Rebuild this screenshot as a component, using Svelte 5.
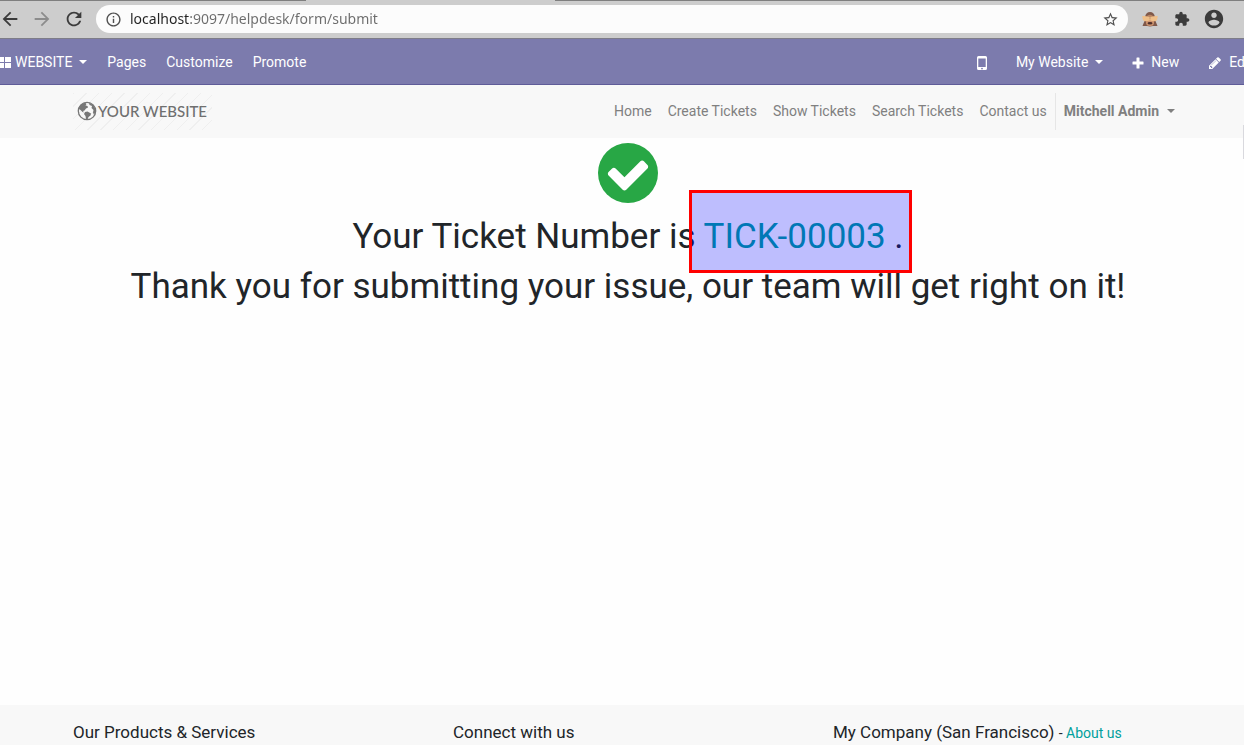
<script>
  const icons = {
    back: 'M20 11H7.83l5.59-5.59L12 4l-8 8 8 8 1.41-1.41L7.83 13H20v-2z',
    forward: 'M12 4l-1.41 1.41L16.17 11H4v2h12.17l-5.58 5.59L12 20l8-8z',
    reload: 'M17.65 6.35C16.2 4.9 14.21 4 12 4c-4.42 0-7.99 3.58-7.99 8s3.57 8 7.99 8c3.73 0 6.84-2.55 7.73-6h-2.08c-.82 2.33-3.04 4-5.65 4-3.31 0-6-2.69-6-6s2.69-6 6-6c1.66 0 3.14.69 4.22 1.78L13 11h7V4l-2.35 2.35z',
    info: 'M11 17h2v-6h-2v6zm1-15C6.48 2 2 6.48 2 12s4.48 10 10 10 10-4.48 10-10S17.52 2 12 2zm0 18c-4.41 0-8-3.59-8-8s3.59-8 8-8 8 3.59 8 8-3.59 8-8 8zM11 9h2V7h-2v2z',
    star: 'M22 9.24l-7.19-.62L12 2 9.19 8.63 2 9.24l5.46 4.73L5.82 21 12 17.27 18.18 21l-1.63-7.03L22 9.24zM12 15.4l-3.76 2.27 1-4.28-3.32-2.88 4.38-.38L12 6.1l1.71 4.04 4.38.38-3.32 2.88 1 4.28L12 15.4z',
    puzzle: 'M20.5 11H19V7c0-1.1-.9-2-2-2h-4V3.5C13 2.12 11.88 1 10.5 1S8 2.12 8 3.5V5H4c-1.1 0-1.99.9-1.99 2v3.8H3.5c1.49 0 2.7 1.21 2.7 2.7s-1.21 2.7-2.7 2.7H2V20c0 1.1.9 2 2 2h3.8v-1.5c0-1.49 1.21-2.7 2.7-2.7 1.49 0 2.7 1.21 2.7 2.7V22H17c1.1 0 2-.9 2-2v-4h1.5c1.38 0 2.5-1.12 2.5-2.5S21.88 11 20.5 11z',
    account: 'M12 2C6.48 2 2 6.48 2 12s4.48 10 10 10 10-4.48 10-10S17.52 2 12 2zm0 3c1.66 0 3 1.34 3 3s-1.34 3-3 3-3-1.34-3-3 1.34-3 3-3zm0 14.2c-2.5 0-4.71-1.28-6-3.22.03-1.99 4-3.08 6-3.08 1.99 0 5.97 1.09 6 3.08-1.29 1.94-3.5 3.22-6 3.22z'
  };
  const links = ['Home', 'Create Tickets', 'Show Tickets', 'Search Tickets', 'Contact us'];
  let url = $state('localhost:9097/helpdesk/form/submit');
</script>

{#snippet glyph(name, size)}
  <svg width={size} height={size} viewBox="0 0 24 24" fill="currentColor" aria-hidden="true"><path d={icons[name]} /></svg>
{/snippet}

<div class="page">
  <div class="browser">
    <button class="tool" aria-label="Back">{@render glyph('back', 22)}</button>
    <button class="tool dim" aria-label="Forward">{@render glyph('forward', 22)}</button>
    <button class="tool" aria-label="Reload">{@render glyph('reload', 22)}</button>
    <div class="omnibox">
      <button class="info" aria-label="Site information">{@render glyph('info', 17)}</button>
      <input aria-label="Address" spellcheck="false" bind:value={url} />
      <button class="star" aria-label="Bookmark">{@render glyph('star', 17)}</button>
    </div>
    <button class="tool" aria-label="Debug mode">
      <svg width="16" height="16" viewBox="0 0 16 16" aria-hidden="true">
        <path d="M3 6Q4 1 8 1Q12 1 13 6L13.500 10 15.500 15H11L8 15.500 5 15H.5L2.500 10Z" fill="#80594a" />
        <ellipse cx="8" cy="11.500" rx="4" ry="3.500" fill="#cf9670" />
        <path d="M5.500 4.500Q8 3 10.500 4.500L11 6H5Z" fill="#b98462" />
        <path d="M.300 5Q3 4.500 7.800 6V9.500Q4.500 11 1.500 9.800 .3 8 .3 5ZM15.700 5Q13 4.500 8.200 6V9.500Q11.500 11 14.500 9.800 15.700 8 15.700 5Z" fill="#efc08a" />
        <ellipse cx="8" cy="12.300" rx="2.500" ry="1.300" fill="#4f2f2b" />
      </svg>
    </button>
    <button class="tool" aria-label="Extensions">{@render glyph('puzzle', 16)}</button>
    <button class="tool" aria-label="Profile">{@render glyph('account', 22)}</button>
  </div>

  <nav class="editor" aria-label="Website editor">
    <a class="apps" href="#website">
      <svg width="11" height="12" viewBox="0 0 11 12" fill="#fff" aria-hidden="true"><path d="M0 0h4v5H0zM5 0h6v5H5zM0 6h4v5H0zM5 6h6v5H5z" /></svg>
      WEBSITE <span class="caret"></span>
    </a>
    <a href="#pages">Pages</a>
    <a href="#customize">Customize</a>
    <a href="#promote">Promote</a>
    <div class="actions">
      <button aria-label="Mobile preview">
        <svg width="10" height="14" viewBox="0 0 10 14" aria-hidden="true"><path fill="#fff" fill-rule="evenodd" d="M1.500 0h7Q10 0 10 1.500v11Q10 14 8.500 14h-7Q0 14 0 12.500v-11Q0 0 1.500 0zM1.300 2.500v8.500h7.400V2.500zM5 11.800a.8.800 0 1 0 .01 0z" /></svg>
      </button>
      <button>My Website <span class="caret"></span></button>
      <button>
        <svg width="12" height="12" viewBox="0 0 12 12" fill="#fff" aria-hidden="true"><path d="M4.500 1Q4.500.5 5 .5h2q.5 0 .5.500v3.500H11q.5 0 .5.500v2q0 .5-.5.500H7.500V11q0 .5-.5.500H5q-.5 0-.5-.500V7.500H1Q.5 7.500.5 7V5q0-.5.500-.5h3.500z" /></svg>
        New
      </button>
      <button>
        <svg width="14" height="14" viewBox="0 0 1792 1792" fill="#fff" aria-hidden="true"><path d="M491 1536l91-91-235-235-91 91v107h128v128h107zm523-928q0-22-22-22-10 0-17 7l-542 542q-7 7-7 17 0 22 22 22 10 0 17-7l542-542q7-7 7-17zm-54-192l416 416-832 832h-416v-416zm683 96q0 53-37 90l-166 166-416-416 166-165q36-38 90-38 53 0 91 38l235 234q37 39 37 91z" /></svg>
        Edit
      </button>
    </div>
  </nav>

  <header>
    <a class="logo" href="#home">
      <svg width="20" height="20" viewBox="0 0 20 20" aria-hidden="true">
        <circle cx="10" cy="10" r="8.700" fill="none" stroke="#777" stroke-width="1.300" />
        <path fill="#777" d="M2 6Q4 2.500 8 1.500L9.500 3 8.500 4.500l2 .5.500 1.500-2 1-1.500 2-1.500.5 1 1.500-1.500-.5L3.500 9 2 8zM8 11l2.500-.5 3.500 2-.5 2-2 1.500-1 2.500-1.500-.5-.5-3L7 13zM12 1.500Q16 3 18 7l.5 4-1.500 3-1-2.500.5-2.500-2-2 .5-2-2.500-1z" />
      </svg>
      YOUR WEBSITE
    </a>
    <nav class="menu" aria-label="Main">
      {#each links as link}
        <a href="#{link.toLowerCase().replace(' ', '-')}">{link}</a>
      {/each}
      <button class="user">Mitchell Admin <span class="caret"></span></button>
    </nav>
  </header>

  <main>
    <svg class="check" width="60" height="60" viewBox="0 0 1536 1536" aria-hidden="true">
      <circle cx="768" cy="768" r="768" fill="#28a745" />
      <path fill="#fff" d="M1284 606q0-28-18-46l-91-90q-19-19-45-19t-45 19l-408 407-226-226q-19-19-45-19t-45 19l-91 90q-18 18-18 46 0 27 18 45l362 362q19 19 45 19 27 0 46-19l543-543q18-18 18-45z" />
    </svg>
    <h1>Your Ticket Number is <span class="ticket"><a href="#ticket">TICK-00003</a> .</span></h1>
    <h1>Thank you for submitting your issue, our team will get right on it!</h1>
  </main>

  <footer>
    <h2>Our Products &amp; Services</h2>
    <h2>Connect with us</h2>
    <h2>My Company (San Francisco) <small>- <a href="#about">About us</a></small></h2>
  </footer>
</div>

<style>
  :global(body) { margin: 0; }
  .page {
    position: relative;
    display: flex;
    flex-direction: column;
    min-height: 100vh;
    overflow: hidden;
    background: #fefefe;
    color: #212529;
    font: 14px/21px Roboto, sans-serif;
  }
  .page::after {
    content: '';
    position: absolute;
    top: 125px;
    right: 0;
    width: 1px;
    height: 34px;
    background: #d9d9de;
  }
  a { color: inherit; text-decoration: none; }
  button {
    padding: 0;
    border: 0;
    background: none;
    color: inherit;
    font: inherit;
    white-space: nowrap;
  }
  svg { display: block; flex: none; }
  .caret {
    margin-bottom: 2px;
    border: 4px solid transparent;
    border-top-color: currentColor;
    border-bottom: 0;
  }
  .browser {
    display: flex;
    align-items: center;
    height: 38px;
    padding-right: 14px;
    margin-left: -6px;
    border-bottom: 1px solid #7e7d88;
    background: linear-gradient(90deg, #7f7f7f 312px, transparent 312px 561px, #7f7f7f 561px) top / 100% 1px no-repeat #cdcdcd;
    color: #3b3b3b;
  }
  .tool {
    display: flex;
    align-items: center;
    justify-content: center;
    flex: none;
    width: 32px;
    height: 32px;
  }
  .dim { color: #8c8c8c; }
  .omnibox {
    display: flex;
    align-items: center;
    flex: 1;
    gap: 8px;
    height: 28px;
    margin: 0 6px;
    padding: 0 9px;
    border-radius: 14px;
    background: #fcfcfc;
    color: #505050;
  }
  .omnibox input {
    flex: 1;
    min-width: 0;
    padding: 0;
    border: 0;
    outline: 0;
    font: 14px/20px "Noto Sans", sans-serif;
    background: linear-gradient(90deg, #222 60px, #6c6c6c 60px);
    background-clip: text;
    color: transparent;
  }
  .editor {
    display: flex;
    align-items: center;
    gap: 20px;
    height: 43px;
    padding-top: 2px;
    border-bottom: 1px solid #5f5c98;
    background: #7c7bad;
    color: #fff;
    white-space: nowrap;
  }
  .apps, .actions button, .user { display: flex; align-items: center; }
  .apps { gap: 4px; }
  .apps .caret { margin-left: 3px; }
  .actions {
    display: flex;
    gap: 29px;
    margin: 0 -9px 0 auto;
  }
  .actions button { gap: 7px; }
  header {
    display: flex;
    align-items: center;
    justify-content: space-between;
    height: 53px;
    padding: 0 69px 0 73px;
    background: #f8f8f8;
    color: #808080;
    white-space: nowrap;
  }
  .logo {
    display: flex;
    align-items: center;
    gap: 1px;
    height: 35px;
    padding: 0 5px 2px 4px;
    background: repeating-linear-gradient(135deg, #efefef 0 1px, transparent 1px 9px);
    color: #6f6f6f;
    font: 500 15px/20px Lato, sans-serif;
  }
  .menu { display: flex; align-items: center; gap: 16px; }
  .user {
    gap: 8px;
    height: 37px;
    margin-left: -8px;
    padding-left: 8px;
    border-left: 1px solid #e6e6e6;
    font-weight: 700;
  }
  main {
    flex: 1;
    padding: 5px 0 0 12px;
    text-align: center;
  }
  .check { margin: 0 auto 13px; }
  h1 {
    margin: 0 0 8px;
    font-size: 35px;
    font-weight: 400;
    line-height: 42px;
  }
  .ticket { position: relative; }
  .ticket a, footer a { color: #00a09d; }
  .ticket::after {
    content: '';
    position: absolute;
    inset: -26px -8px -16px -15px;
    border: 3px solid #f00;
    background: rgba(0, 0, 255, 0.25);
    background-clip: padding-box;
    pointer-events: none;
  }
  footer {
    display: grid;
    grid-template-columns: repeat(3, 1fr);
    padding: 17px 31px 2px 73px;
    background: #f8f8f8;
  }
  h2 {
    margin: 0;
    font-size: 17px;
    font-weight: 400;
    line-height: 21px;
  }
  small { font-size: 14px; line-height: 14px; }
</style>
